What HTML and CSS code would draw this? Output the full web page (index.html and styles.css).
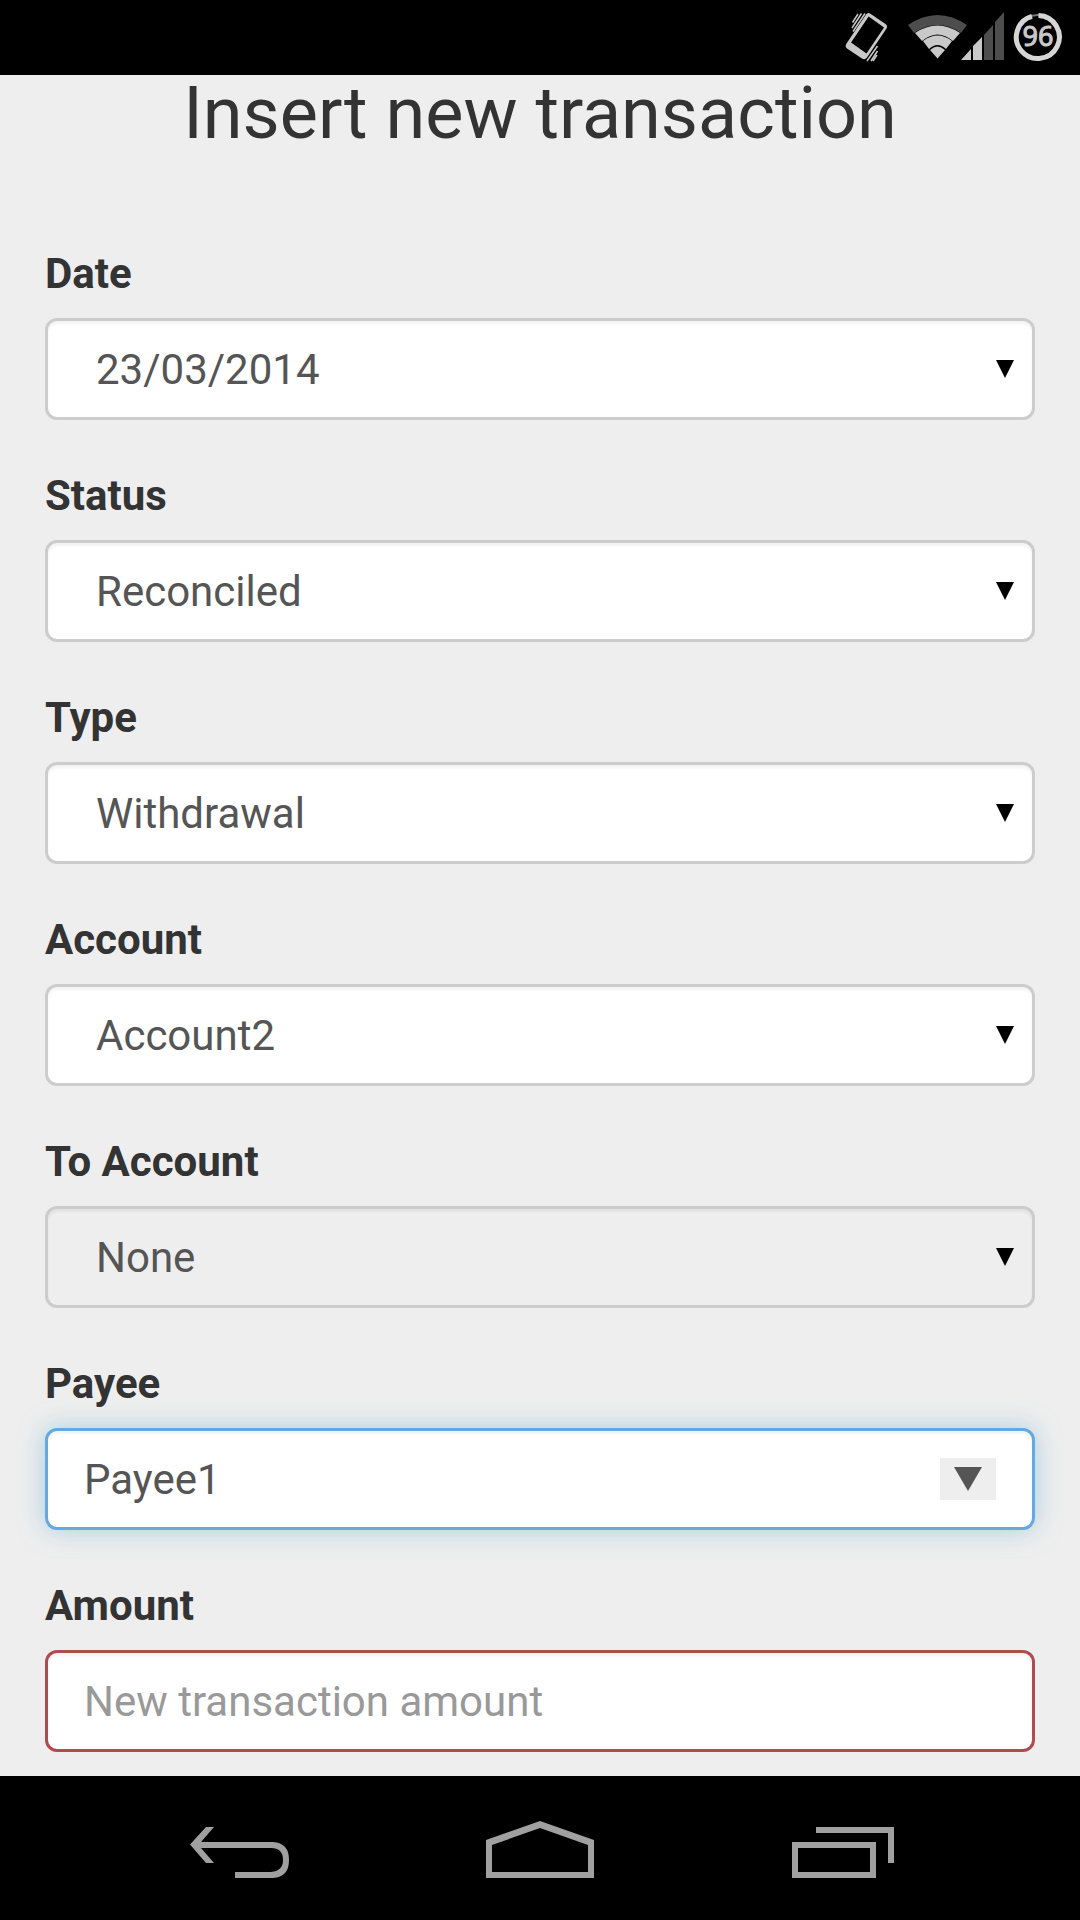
FILE: index.html
```html
<!DOCTYPE html>
<html lang="en">
<head>
<meta charset="utf-8">
<meta name="viewport" content="width=device-width, initial-scale=1">
<title>Insert new transaction</title>
<link rel="stylesheet" href="styles.css">
</head>
<body>
<header class="status-bar">
  <svg class="status-icon" width="48" height="75" viewBox="842 0 48 75" role="img" aria-label="Vibrate">
    <path fill="#c8c8c8" fill-rule="evenodd" d="M870 13.500 L885.500 24 Q888 26 886.500 28.500 L867 57.500 Q865 60.500 862 58.500 L847 48.500 Q844.500 46.500 846.500 43.500 L866 14.500 Q867.500 12 870 13.500Z M868.700 16.500 L851 42.500 L866.500 53.500 L884 27.500Z"/>
    <path fill="none" stroke="#c8c8c8" stroke-width="1.500" d="M865 13.500 L853 31.500 M861.500 13.500 L852 28 M858 14 L852.500 22.500 M877.500 46 L867 61 M877.500 51 L871 61 M877 55 L873 61"/>
  </svg>
  <svg class="status-icon" width="96" height="75" viewBox="908 0 96 75" role="img" aria-label="Wi-Fi and mobile signal">
    <path fill="#4d4d4d" d="M908 25 Q937.500 5 967 25 L961 33 Q937.500 17 914 33Z"/>
    <path fill="#c9c9c9" d="M915 33 Q937.500 18 960 33 L953 41 Q937.500 28 922 41Z M923 41 Q937.500 30 952 41 L946 49 Q937.500 41 929 49Z M930 50 Q937.500 43 945 50 L937.500 58.500Z"/>
    <path fill="#c9c9c9" d="M961 60 L971 49 V60Z M973 46 L982 37 V60 H973Z"/>
    <path fill="#4d4d4d" d="M984 35 L993 25 V60 H984Z M995 22 L1004 12 V60 H995Z"/>
  </svg>
  <svg class="status-icon" width="50" height="75" viewBox="1013 0 50 75" role="img" aria-label="Battery 96 percent">
    <circle cx="1038" cy="37" r="22" fill="none" stroke="#777" stroke-width="2"/>
    <path fill="none" stroke="#d6d6d6" stroke-width="5" d="M1038.500 15.500 A21.500 21.500 0 1 1 1032 16.300"/>
    <text class="battery-level" x="1038" y="46" text-anchor="middle">96</text>
  </svg>
</header>

<main class="page">
  <h1 class="page-title">Insert new transaction</h1>
  <form class="form">
    <div class="group">
      <label class="label" for="date">Date</label>
      <div class="select-wrap">
        <select class="control select" id="date"><option>23/03/2014</option></select>
        <svg class="caret" width="18" height="18" viewBox="0 0 18 18" aria-hidden="true"><path d="M0 0H18L9 18Z"/></svg>
      </div>
    </div>
    <div class="group">
      <label class="label" for="status">Status</label>
      <div class="select-wrap">
        <select class="control select" id="status"><option>Reconciled</option></select>
        <svg class="caret" width="18" height="18" viewBox="0 0 18 18" aria-hidden="true"><path d="M0 0H18L9 18Z"/></svg>
      </div>
    </div>
    <div class="group">
      <label class="label" for="type">Type</label>
      <div class="select-wrap">
        <select class="control select" id="type"><option>Withdrawal</option></select>
        <svg class="caret" width="18" height="18" viewBox="0 0 18 18" aria-hidden="true"><path d="M0 0H18L9 18Z"/></svg>
      </div>
    </div>
    <div class="group">
      <label class="label" for="account">Account</label>
      <div class="select-wrap">
        <select class="control select" id="account"><option>Account2</option></select>
        <svg class="caret" width="18" height="18" viewBox="0 0 18 18" aria-hidden="true"><path d="M0 0H18L9 18Z"/></svg>
      </div>
    </div>
    <div class="group">
      <label class="label" for="to-account">To Account</label>
      <div class="select-wrap">
        <select class="control select" id="to-account" disabled><option>None</option></select>
        <svg class="caret" width="18" height="18" viewBox="0 0 18 18" aria-hidden="true"><path d="M0 0H18L9 18Z"/></svg>
      </div>
    </div>
    <div class="group">
      <label class="label" for="payee">Payee</label>
      <div class="control combo">
        <input class="combo-input" id="payee" type="text" value="Payee1">
        <button class="combo-button" type="button" aria-label="Show payees">
          <svg width="28" height="24" viewBox="0 0 28 24" aria-hidden="true"><path fill="#555" d="M0 0H28L14 24Z"/></svg>
        </button>
      </div>
    </div>
    <div class="group">
      <label class="label" for="amount">Amount</label>
      <input class="control invalid" id="amount" type="text" placeholder="New transaction amount">
    </div>
  </form>
</main>

<nav class="nav-bar">
  <button class="nav-button" type="button" aria-label="Back">
    <svg width="108" height="144" viewBox="186 1776 108 144" aria-hidden="true">
      <path fill="#a0a0a0" d="M190 1844.500 L206 1827 H214 L201 1842 H273 Q289 1843 289 1860 Q289 1877 273 1878 H235 V1872 H271 Q283 1871 283 1860 Q283 1848 271 1848 H201 L214 1863 H206Z"/>
    </svg>
  </button>
  <button class="nav-button" type="button" aria-label="Home">
    <svg width="108" height="144" viewBox="486 1776 108 144" aria-hidden="true">
      <path fill="#a0a0a0" fill-rule="evenodd" d="M486 1840 L540 1821 L594 1840 V1878 H486Z M492 1845 V1872 H588 V1845 L540 1828Z"/>
    </svg>
  </button>
  <button class="nav-button" type="button" aria-label="Recent apps">
    <svg width="108" height="144" viewBox="786 1776 108 144" aria-hidden="true">
      <path fill="#a0a0a0" fill-rule="evenodd" d="M792 1842 H876 V1878 H792Z M798 1848 V1872 H870 V1848Z M816 1827 H894 V1863 H888 V1833 H816Z"/>
    </svg>
  </button>
</nav>
</body>
</html>
```
FILE: styles.css
```css
*,
*::before,
*::after {
  box-sizing: border-box;
}

body {
  margin: 0;
  min-height: 100vh;
  display: flex;
  flex-direction: column;
  background: #eee;
  color: #333;
  font-family: Roboto, "Noto Sans", sans-serif;
  font-size: 42px;
  line-height: 60px;
}

.status-bar {
  display: flex;
  justify-content: flex-end;
  gap: 9px;
  height: 75px;
  padding-right: 17px;
  background: #000;
}

.status-icon {
  display: block;
}

.status-icon:first-child {
  margin-right: 9px;
}

.battery-level {
  fill: #c9c9c9;
  stroke: #c9c9c9;
  stroke-width: 1px;
  font-family: "Noto Sans", sans-serif;
  font-size: 27px;
}

.page {
  flex: 1;
  padding: 0 45px 24px;
}

.page-title {
  margin: 0 0 91px;
  font-size: 72px;
  font-weight: 400;
  line-height: 78px;
  text-align: center;
}

.form {
  display: grid;
  gap: 46px;
}

.group {
  display: grid;
  gap: 14px;
}

.label {
  font-weight: 700;
}

.control {
  width: 100%;
  height: 102px;
  margin: 0;
  padding: 0 36px;
  border: 3px solid #ccc;
  border-radius: 12px;
  background: #fff;
  box-shadow: inset 0 3px 3px rgba(0, 0, 0, 0.05);
  color: #555;
  font: inherit;
}

.select-wrap {
  position: relative;
}

.select {
  display: block;
  padding: 2px 48px 0;
  appearance: none;
  opacity: 1;
}

.select:disabled {
  background: #eee;
}

.caret {
  position: absolute;
  top: 42px;
  right: 21px;
  pointer-events: none;
}

.combo {
  display: flex;
  align-items: center;
  border-color: #66a9e0;
  box-shadow: inset 0 3px 3px rgba(0, 0, 0, 0.05), 0 0 24px rgba(102, 175, 220, 0.5);
}

.combo-input {
  flex: 1;
  min-width: 0;
  padding: 2px 0 0;
  border: 0;
  outline: 0;
  background: transparent;
  color: inherit;
  font: inherit;
}

.combo-button {
  display: grid;
  place-items: center;
  width: 56px;
  height: 42px;
  padding: 0;
  border: 0;
  background: #eee;
}

.invalid {
  border-color: #b04c50;
}

.invalid::placeholder {
  color: #999;
  opacity: 1;
}

.nav-bar {
  display: grid;
  grid-template-columns: repeat(3, 1fr);
  height: 144px;
  padding: 0 90px;
  background: #000;
}

.nav-button {
  display: grid;
  place-items: center;
  padding: 0;
  border: 0;
  background: transparent;
}
```
